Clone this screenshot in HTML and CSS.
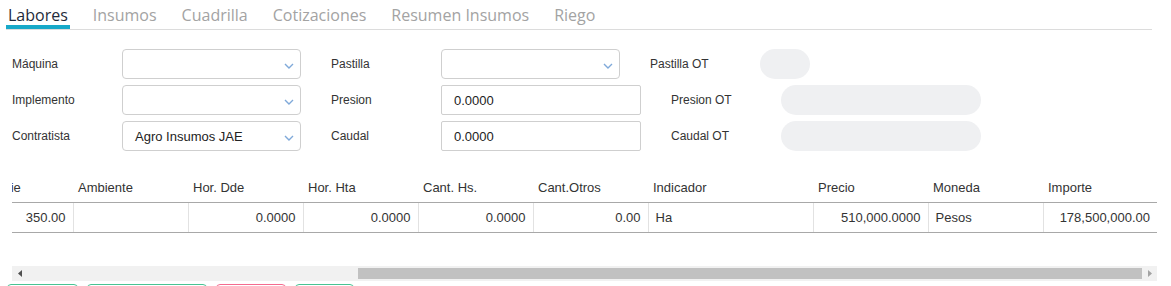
FILE: index.html
```html
<!DOCTYPE html>
<html lang="es">
<head>
    <meta charset="UTF-8">
    <meta name="viewport" content="width=device-width, initial-scale=1.0">
    <title>Labores</title>
    <link rel="stylesheet" href="styles.css">
    <script src="script.js" defer></script>
</head>
<body>
    <nav class="tabs">
        <a class="tab active">Labores</a>
        <a class="tab">Insumos</a>
        <a class="tab">Cuadrilla</a>
        <a class="tab">Cotizaciones</a>
        <a class="tab">Resumen Insumos</a>
        <a class="tab">Riego</a>
    </nav>

    <section class="form">
        <div class="form-row">
            <div class="field">
                <label>Máquina</label>
                <div class="select"><span></span><svg width="10" height="6" viewBox="0 0 10 6"><path d="M1 1l4 4 4-4" fill="none" stroke="#7fa9d9" stroke-width="1.4"/></svg></div>
            </div>
            <div class="field">
                <label>Pastilla</label>
                <div class="select"><span></span><svg width="10" height="6" viewBox="0 0 10 6"><path d="M1 1l4 4 4-4" fill="none" stroke="#7fa9d9" stroke-width="1.4"/></svg></div>
            </div>
            <div class="field">
                <label>Pastilla OT</label>
                <div class="pill small"></div>
            </div>
        </div>
        <div class="form-row">
            <div class="field">
                <label>Implemento</label>
                <div class="select"><span></span><svg width="10" height="6" viewBox="0 0 10 6"><path d="M1 1l4 4 4-4" fill="none" stroke="#7fa9d9" stroke-width="1.4"/></svg></div>
            </div>
            <div class="field">
                <label>Presion</label>
                <input type="text" value="0.0000">
            </div>
            <div class="field">
                <label>Presion OT</label>
                <div class="pill"></div>
            </div>
        </div>
        <div class="form-row">
            <div class="field">
                <label>Contratista</label>
                <div class="select"><span>Agro Insumos JAE</span><svg width="10" height="6" viewBox="0 0 10 6"><path d="M1 1l4 4 4-4" fill="none" stroke="#7fa9d9" stroke-width="1.4"/></svg></div>
            </div>
            <div class="field">
                <label>Caudal</label>
                <input type="text" value="0.0000">
            </div>
            <div class="field">
                <label>Caudal OT</label>
                <div class="pill"></div>
            </div>
        </div>
    </section>

    <div class="grid-scroll">
        <table class="grid">
            <colgroup>
                <col style="width:429px">
                <col style="width:115px">
                <col style="width:115px">
                <col style="width:115px">
                <col style="width:115px">
                <col style="width:115px">
                <col style="width:115px">
                <col style="width:165px">
                <col style="width:115px">
                <col style="width:115px">
                <col style="width:114px">
            </colgroup>
            <thead>
                <tr>
                    <th></th>
                    <th>Superficie</th>
                    <th>Ambiente</th>
                    <th>Hor. Dde</th>
                    <th>Hor. Hta</th>
                    <th>Cant. Hs.</th>
                    <th>Cant.Otros</th>
                    <th>Indicador</th>
                    <th>Precio</th>
                    <th>Moneda</th>
                    <th>Importe</th>
                </tr>
            </thead>
            <tbody>
                <tr>
                    <td></td>
                    <td class="num">350.00</td>
                    <td></td>
                    <td class="num">0.0000</td>
                    <td class="num">0.0000</td>
                    <td class="num">0.0000</td>
                    <td class="num">0.00</td>
                    <td>Ha</td>
                    <td class="num">510,000.0000</td>
                    <td>Pesos</td>
                    <td class="num">178,500,000.00</td>
                </tr>
            </tbody>
        </table>
    </div>
    <div class="hscroll">
        <div class="hscroll-btn"><svg width="4" height="7" viewBox="0 0 4 7"><polygon points="4,0 4,7 0,3.5" fill="#505050"/></svg></div>
        <div class="hscroll-track"><div class="hscroll-thumb"></div></div>
        <div class="hscroll-btn"><svg width="4" height="7" viewBox="0 0 4 7"><polygon points="0,0 0,7 4,3.5" fill="#a3a3a3"/></svg></div>
    </div>

    <div class="actions">
        <button class="btn green btn-1">Guardar</button>
        <button class="btn green btn-2">Agregar Insumo</button>
        <button class="btn pink btn-3">Eliminar</button>
        <button class="btn green btn-4">Nuevo</button>
    </div>
</body>
</html>
```

FILE: styles.css
```css
body {
    font-family: 'Liberation Sans', Arial, sans-serif;
    color: #333;
    margin: 0;
    padding: 0;
    background-color: #fff;
    overflow: hidden;
}
.tabs {
    display: flex;
    margin: 0 19px 0 6px;
    padding-top: 5px;
    border-bottom: 1px solid #dcdcdc;
    font-family: 'Open Sans', sans-serif;
}
.tab {
    font-size: 16px;
    line-height: 20px;
    color: #a3a3a3;
    padding: 0 2px;
    margin-right: 21px;
    border-bottom: 4px solid transparent;
}
.tab.active {
    color: #1e2a3a;
    border-bottom-color: #17a9c9;
}
.form {
    padding: 19px 0 0 12px;
    display: flex;
    flex-direction: column;
    gap: 6px;
}
.form-row {
    display: flex;
    gap: 30px;
}
.field {
    display: flex;
    align-items: center;
}
.field label {
    width: 110px;
    font-size: 12px;
}
.select {
    width: 179px;
    height: 30px;
    box-sizing: border-box;
    border: 1px solid #cfcfcf;
    border-radius: 4px;
    display: flex;
    align-items: center;
    justify-content: space-between;
    padding: 0 6px 0 12px;
    font-size: 13px;
    color: #222;
}
.select svg {
    margin-top: 3px;
}
.field input {
    width: 200px;
    height: 30px;
    box-sizing: border-box;
    border: 1px solid #cfcfcf;
    border-radius: 2px;
    padding: 0 12px;
    font-family: 'Liberation Sans', Arial, sans-serif;
    font-size: 13px;
    color: #222;
    outline: none;
}
.pill {
    width: 200px;
    height: 30px;
    border-radius: 15px;
    background-color: #eff0f2;
}
.pill.small {
    width: 50px;
}
.grid-scroll {
    margin: 22px 14px 0 12px;
    height: 93px;
    overflow: hidden;
}
.grid {
    border-collapse: collapse;
    table-layout: fixed;
    width: 1628px;
    font-size: 13px;
}
.grid th {
    font-weight: normal;
    text-align: left;
    height: 29px;
    padding: 0 5px;
    border-bottom: 1px solid #a8a8a8;
    white-space: nowrap;
    overflow: hidden;
}
.grid td {
    height: 29px;
    padding: 0 7px;
    border-right: 1px solid #e2e2e2;
    border-bottom: 1px solid #a8a8a8;
    white-space: nowrap;
    overflow: hidden;
}
.grid td:last-child {
    border-right: none;
}
.grid td.num {
    text-align: right;
}
.hscroll {
    display: flex;
    height: 15px;
    margin: 0 14px 0 12px;
    background-color: #f1f1f1;
}
.hscroll-btn {
    width: 15px;
    display: flex;
    align-items: center;
    justify-content: center;
}
.hscroll-track {
    flex: 1;
    display: flex;
    align-items: center;
}
.hscroll-thumb {
    height: 11px;
    width: 784px;
    margin-left: 331px;
    background-color: #c1c1c1;
}
.actions {
    display: flex;
    gap: 9px;
    margin: 3px 0 0 7px;
}
.btn {
    height: 30px;
    background-color: #fff;
    border-radius: 4px;
    font-size: 13px;
    color: #fff;
    border: 1px solid;
}
.btn.green {
    border-color: #48c393;
}
.btn.pink {
    border-color: #f56b8f;
}
.btn-1 { width: 71px; }
.btn-2 { width: 120px; }
.btn-3 { width: 70px; }
.btn-4 { width: 59px; }
```

FILE: script.js
```js
window.addEventListener('load', function () {
    const grid = document.querySelector('.grid-scroll');
    grid.scrollLeft = grid.scrollWidth;

    // keep the drawn scrollbar in step with the grid
    const track = document.querySelector('.hscroll-track');
    const thumb = document.querySelector('.hscroll-thumb');
    const len = track.clientWidth;
    thumb.style.width = (len * grid.clientWidth / grid.scrollWidth) + 'px';
    thumb.style.marginLeft = (len * grid.scrollLeft / grid.scrollWidth) + 'px';
});
```
